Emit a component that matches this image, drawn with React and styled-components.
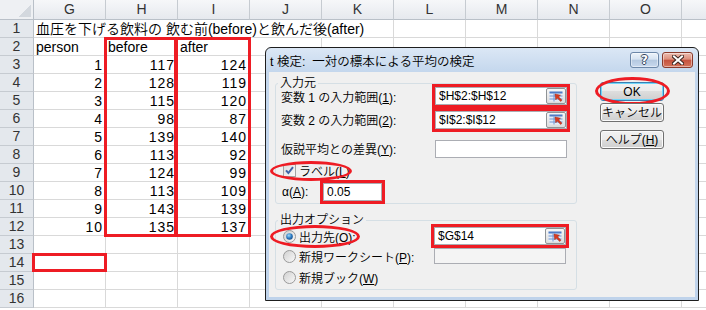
import React from 'react';
import styled, { createGlobalStyle } from 'styled-components';

const GlobalStyle = createGlobalStyle`
  html, body { margin: 0; padding: 0; background: #fff; }
  body { font-family: "Liberation Sans", "Noto Sans CJK JP", sans-serif; }
`;

const Screen = styled.div`
  position: relative;
  width: 706px;
  height: 310px;
  overflow: hidden;
  background: #fff;
  font-family: "Liberation Sans", "Noto Sans CJK JP", sans-serif;
  font-weight: 350;
`;

// ---------- spreadsheet ----------

const Sheet = styled.div`
  display: grid;
  grid-template-columns: 34px repeat(10, 72px);
  grid-template-rows: 20px repeat(16, 18px);
`;

const Corner = styled.div`
  box-sizing: border-box;
  border-right: 1px solid #b9c0c8;
  border-bottom: 1px solid #b9c0c8;
  background:
    linear-gradient(135deg, transparent 50%, #d3d8de 50%) no-repeat right 2px bottom 2px / 12px 12px,
    #eef0f3;
`;

const ColHead = styled.div`
  box-sizing: border-box;
  border-right: 1px solid #c6cbd1;
  border-bottom: 1px solid #b9c0c8;
  background: linear-gradient(#f6f7f9, #e6e9ee);
  color: #333;
  font-size: 14px;
  line-height: 19px;
  text-align: center;
`;

const RowHead = styled.div`
  box-sizing: border-box;
  border-right: 1px solid #b9c0c8;
  border-bottom: 1px solid #c6cbd1;
  background: #e4e8ed;
  color: #333;
  font-size: 14px;
  line-height: 17px;
  text-align: center;
`;

const Cell = styled.div`
  box-sizing: border-box;
  min-width: 0;
  border-right: 1px solid ${p => (p.$open ? 'transparent' : '#d9d9d9')};
  border-bottom: 1px solid #d9d9d9;
  display: flex;
  align-items: flex-end;
  justify-content: ${p => (p.$num ? 'flex-end' : 'flex-start')};
  padding: 0 ${p => (p.$num ? 2 : 0)}px 0 2px;
  color: #000;
  font-size: 14px;
  line-height: 16px;
  letter-spacing: ${p => (p.$num ? '1px' : '0')};
  white-space: nowrap;
`;

// red annotation frames drawn over the sheet
const SheetMark = styled.div`
  position: absolute;
  box-sizing: border-box;
  left: ${p => p.$x}px;
  top: ${p => p.$y}px;
  width: ${p => p.$w}px;
  height: ${p => p.$h}px;
  border: 3px solid #ee1c24;
`;

// ---------- dialog ----------

const Dialog = styled.div`
  position: absolute;
  left: 265px;
  top: 47px;
  width: 434px;
  height: 254px;
  box-sizing: border-box;
  border: 1px solid #1e1e1e;
  border-radius: 6px 6px 0 0;
  background: linear-gradient(#dbe7f5, #c4d7ed 24px, #bfd3eb);
  padding: 0 3px 3px;
  display: flex;
  flex-direction: column;
  color: #000;
  font-size: 12px;
`;

const TitleBar = styled.div`
  height: 24px;
  display: flex;
  align-items: center;
  padding: 0 2px 0 1px;
`;

const Title = styled.div`
  flex: 1;
  font-size: 12.5px;
  white-space: pre;
`;

const CaptionButton = styled.div`
  box-sizing: border-box;
  width: ${p => p.$w}px;
  height: 16px;
  margin-left: 3px;
  border: 1px solid ${p => (p.$close ? '#8a3a2c' : '#6c87a8')};
  border-radius: 3px;
  background: ${p =>
    p.$close
      ? 'linear-gradient(#ecbcb0 0%, #dc8f7c 45%, #c5513d 50%, #d4735a 100%)'
      : 'linear-gradient(#edf3fa 0%, #d6e3f1 45%, #b4c8e0 50%, #c8d9ee 100%)'};
  box-shadow: inset 0 0 0 1px rgba(255, 255, 255, 0.45);
  display: flex;
  align-items: center;
  justify-content: center;
  color: #fff;
  font-family: "DejaVu Sans", sans-serif;
  font-weight: bold;
  font-size: 12px;
  text-shadow: 1px 0 #34465e, -1px 0 #34465e, 0 1px #34465e, 0 -1px #34465e;
`;

const Body = styled.div`
  flex: 1;
  background: #f0f0f0;
  display: flex;
  padding: 10px 0 0 6px;
`;

const LeftColumn = styled.div`
  width: 302px;
  display: flex;
  flex-direction: column;
`;

const GroupBox = styled.div`
  border: 1px solid #d5dfe5;
  border-radius: 3px;
  margin-top: ${p => p.$mt}px;
  padding: 0 0 0 5px;
  display: flex;
  flex-direction: column;
`;

const Caption = styled.div`
  align-self: flex-start;
  background: #f0f0f0;
  padding: 0 2px;
  margin: -8px 0 -6px -3px;
  line-height: 14px;
`;

const FieldRow = styled.div`
  position: relative;
  height: ${p => p.$h}px;
  margin-top: ${p => p.$mt || 0}px;
  display: flex;
  align-items: center;
  white-space: nowrap;
`;

const FieldLabel = styled.div`
  width: ${p => p.$w}px;
  margin-left: ${p => p.$ml || 0}px;
`;

const TextBox = styled.div`
  box-sizing: border-box;
  width: ${p => p.$w}px;
  height: ${p => p.$h || 18}px;
  align-self: ${p => (p.$top ? 'flex-start' : 'center')};
  margin-top: ${p => (p.$top ? 1 : 0)}px;
  border: 1px solid #abadb3;
  background: ${p => (p.$disabled ? '#f4f4f4' : '#fff')};
  outline: ${p => (p.$marked ? '3px solid #ee1c24' : 'none')};
  display: flex;
  align-items: center;
  padding-left: 3px;
  font-size: 12px;
  line-height: 16px;
`;

const BoxText = styled.div`
  flex: 1;
`;

const RefButton = styled.div`
  box-sizing: border-box;
  width: 20px;
  height: 16px;
  border: 1px solid #8f9396;
  border-radius: 2px;
  background: linear-gradient(#f7f7f7, #dcdcdc);
  display: flex;
  align-items: center;
  justify-content: center;
`;

const Tick = styled.div`
  width: 13px;
  height: 13px;
  margin: 0 3px 0 2px;
  display: flex;
`;

const Ellipse = styled.div`
  position: absolute;
  box-sizing: border-box;
  left: ${p => p.$x}px;
  top: ${p => p.$y}px;
  width: ${p => p.$w}px;
  height: ${p => p.$h}px;
  border: 3px solid #ee1c24;
  border-radius: 50%;
  pointer-events: none;
`;

const ButtonColumn = styled.div`
  margin-left: 23px;
  display: flex;
  flex-direction: column;
`;

const PushButton = styled.div`
  position: relative;
  box-sizing: border-box;
  width: 64px;
  height: 19px;
  margin-top: ${p => p.$mt || 0}px;
  border: 1px solid ${p => (p.$default ? '#3c7fb1' : '#707070')};
  border-radius: 3px;
  background: linear-gradient(#f2f2f2 0%, #ebebeb 50%, #dddddd 50%, #cfcfcf 100%);
  box-shadow: inset 0 0 0 1px ${p => (p.$default ? '#6fd6fa' : '#fbfbfb')};
  display: flex;
  align-items: center;
  justify-content: center;
  font-size: 12px;
  line-height: 14px;
`;

// ---------- icons ----------

const CheckIcon = () => (
  <svg width="13" height="13" viewBox="0 0 13 13">
    <defs>
      <linearGradient id="cbg" x1="0" y1="0" x2="1" y2="1">
        <stop offset="0" stopColor="#dcdcdc" />
        <stop offset="1" stopColor="#fbfbfb" />
      </linearGradient>
    </defs>
    <rect x="0.5" y="0.5" width="12" height="12" fill="url(#cbg)" stroke="#a3a3a3" />
    <path d="M3 6.3 L5.4 9 L10 3.2" fill="none" stroke="#3e63a8" strokeWidth="2" />
  </svg>
);

const RadioIcon = ({ on }) => (
  <svg width="13" height="13" viewBox="0 0 13 13">
    <defs>
      <linearGradient id="rbg" x1="0" y1="0" x2="1" y2="1">
        <stop offset="0" stopColor="#cfcfcf" />
        <stop offset="1" stopColor="#fafafa" />
      </linearGradient>
      <radialGradient id="rdot" cx="0.4" cy="0.35" r="0.7">
        <stop offset="0" stopColor="#9fdcfb" />
        <stop offset="0.6" stopColor="#2a78c0" />
        <stop offset="1" stopColor="#1b4f86" />
      </radialGradient>
    </defs>
    <circle cx="6.5" cy="6.5" r="6" fill="url(#rbg)" stroke="#9a9a9a" />
    {on && <circle cx="6.5" cy="6.5" r="3.3" fill="url(#rdot)" />}
  </svg>
);

const RefIcon = () => (
  <svg width="15" height="11" viewBox="0 0 15 11">
    <rect x="0.5" y="0.5" width="13" height="10" fill="#e4ecf8" />
    <rect x="0.5" y="0.5" width="13" height="2" fill="#4f7cc6" />
    <path d="M0.5 5 H13.5 M0.5 8 H13.5 M5 2.5 V10.5" stroke="#7196d2" strokeWidth="1" />
    <path d="M6 3 L11.5 4.2 L9.6 5.8 L13 9.2 L11.7 10.5 L8.3 7.1 L6.8 8.8 Z" fill="#d9381e" stroke="#9c2410" strokeWidth="0.5" />
  </svg>
);

const CloseIcon = () => (
  <svg width="12" height="10" viewBox="0 0 12 10">
    <path d="M2 1.5 L10 8.5 M10 1.5 L2 8.5" stroke="#3b2521" strokeWidth="4" strokeLinecap="square" />
    <path d="M2 1.5 L10 8.5 M10 1.5 L2 8.5" stroke="#fff" strokeWidth="2" strokeLinecap="square" />
  </svg>
);

// ---------- data ----------

const COLS = ['G', 'H', 'I', 'J', 'K', 'L', 'M', 'N', 'O', ''];
const before = [117, 128, 115, 98, 139, 113, 124, 113, 143, 135];
const after = [124, 119, 120, 87, 140, 92, 99, 109, 139, 137];

const rows = Array.from({ length: 16 }, (_, i) => {
  const n = i + 1;
  const cells = Array(10).fill(null);
  if (n === 1) cells[0] = { text: '血圧を下げる飲料の 飲む前(before)と飲んだ後(after)' };
  if (n === 2) {
    cells[0] = { text: 'person' };
    cells[1] = { text: 'before' };
    cells[2] = { text: 'after' };
  }
  if (n >= 3 && n <= 12) {
    const k = n - 3;
    cells[0] = { text: k + 1, num: true };
    cells[1] = { text: before[k], num: true };
    cells[2] = { text: after[k], num: true };
  }
  return cells;
});

const App = () => {
  return (
    <Screen>
      <GlobalStyle />
      <Sheet>
        <Corner />
        {COLS.map((c, j) => (
          <ColHead key={j}>{c}</ColHead>
        ))}
        {rows.map((cells, i) => (
          <React.Fragment key={i}>
            <RowHead>{i + 1}</RowHead>
            {cells.map((c, j) => (
              <Cell key={j} $num={c && c.num} $open={i === 0 && j < 4}>
                {c ? c.text : ''}
              </Cell>
            ))}
          </React.Fragment>
        ))}
      </Sheet>

      <SheetMark $x={104} $y={37} $w={73} $h={200} />
      <SheetMark $x={175} $y={37} $w={76} $h={200} />
      <SheetMark $x={32} $y={253} $w={75} $h={19} />

      <Dialog>
        <TitleBar>
          <Title>t 検定:  一対の標本による平均の検定</Title>
          <CaptionButton $w={29}>?</CaptionButton>
          <CaptionButton $w={31} $close>
            <CloseIcon />
          </CaptionButton>
        </TitleBar>
        <Body>
          <LeftColumn>
            <GroupBox $mt={1}>
              <Caption>入力元</Caption>
              <FieldRow $h={22} $mt={1}>
                <FieldLabel $w={154}>変数 1 の入力範囲(<u>1</u>):</FieldLabel>
                <TextBox $w={132} $marked>
                  <BoxText>$H$2:$H$12</BoxText>
                  <RefButton>
                    <RefIcon />
                  </RefButton>
                </TextBox>
              </FieldRow>
              <FieldRow $h={23} $mt={1}>
                <FieldLabel $w={154}>変数 2 の入力範囲(<u>2</u>):</FieldLabel>
                <TextBox $w={132} $marked>
                  <BoxText>$I$2:$I$12</BoxText>
                  <RefButton>
                    <RefIcon />
                  </RefButton>
                </TextBox>
              </FieldRow>
              <FieldRow $h={19} $mt={8}>
                <FieldLabel $w={154}>仮説平均との差異(<u>Y</u>):</FieldLabel>
                <TextBox $w={132} />
              </FieldRow>
              <FieldRow $h={20} $mt={2}>
                <Tick>
                  <CheckIcon />
                </Tick>
                <span>
                  ラベル(<u>L</u>)
                </span>
                <Ellipse $x={-11} $y={1} $w={82} $h={20} />
              </FieldRow>
              <FieldRow $h={22} $mt={1}>
                <FieldLabel $w={41} $ml={1}>
                  α(<u>A</u>):
                </FieldLabel>
                <TextBox $w={59} $marked>
                  <BoxText>0.05</BoxText>
                </TextBox>
              </FieldRow>
            </GroupBox>

            <GroupBox $mt={16}>
              <Caption>出力オプション</Caption>
              <FieldRow $h={22} $mt={4}>
                <Tick>
                  <RadioIcon on />
                </Tick>
                <FieldLabel $w={135}>
                  出力先(<u>O</u>):
                </FieldLabel>
                <TextBox $w={132} $marked>
                  <BoxText>$G$14</BoxText>
                  <RefButton>
                    <RefIcon />
                  </RefButton>
                </TextBox>
                <Ellipse $x={-11} $y={0} $w={90} $h={23} />
              </FieldRow>
              <FieldRow $h={19}>
                <Tick>
                  <RadioIcon />
                </Tick>
                <FieldLabel $w={135}>
                  新規ワークシート(<u>P</u>):
                </FieldLabel>
                <TextBox $w={132} $h={16} $top $disabled />
              </FieldRow>
              <FieldRow $h={23}>
                <Tick>
                  <RadioIcon />
                </Tick>
                <span>
                  新規ブック(<u>W</u>)
                </span>
              </FieldRow>
            </GroupBox>
          </LeftColumn>

          <ButtonColumn>
            <PushButton $default>
              OK
              <Ellipse $x={-6} $y={-6} $w={75} $h={28} />
            </PushButton>
            <PushButton $mt={2}>キャンセル</PushButton>
            <PushButton $mt={8}>
              ヘルプ(<u>H</u>)
            </PushButton>
          </ButtonColumn>
        </Body>
      </Dialog>
    </Screen>
  );
};

export default App;
